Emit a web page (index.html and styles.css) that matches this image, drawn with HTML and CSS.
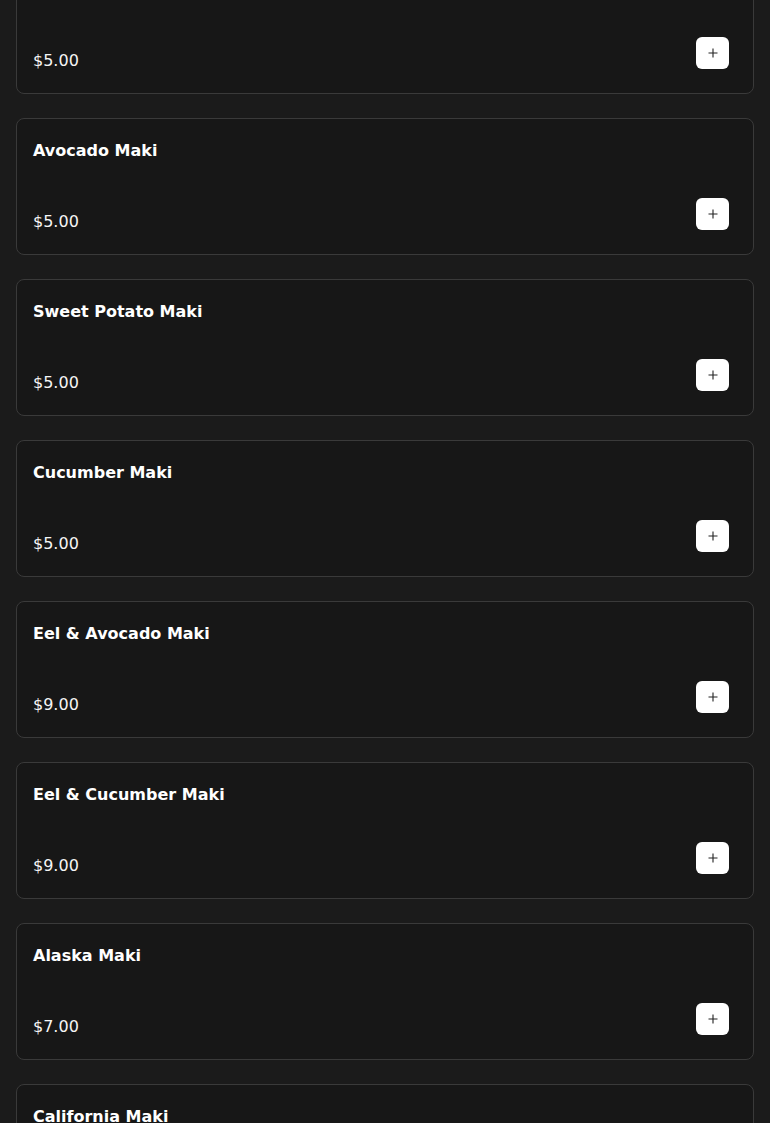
FILE: index.html
```html
<!DOCTYPE html>
<html lang="en">
<head>
    <meta charset="UTF-8">
    <meta name="viewport" content="width=device-width, initial-scale=1.0">
    <title>Menu - Maki</title>
    <link rel="stylesheet" href="styles.css">
</head>
<body>
    <div class="menu">
        <div class="item">
            <h3>Salmon Maki</h3>
            <div class="item-footer">
                <span class="price">$5.00</span>
                <button class="add-btn" aria-label="Add">
                    <svg viewBox="0 0 12 12"><path d="M6 1.5v9M1.5 6h9"/></svg>
                </button>
            </div>
        </div>
        <div class="item">
            <h3>Avocado Maki</h3>
            <div class="item-footer">
                <span class="price">$5.00</span>
                <button class="add-btn" aria-label="Add">
                    <svg viewBox="0 0 12 12"><path d="M6 1.5v9M1.5 6h9"/></svg>
                </button>
            </div>
        </div>
        <div class="item">
            <h3>Sweet Potato Maki</h3>
            <div class="item-footer">
                <span class="price">$5.00</span>
                <button class="add-btn" aria-label="Add">
                    <svg viewBox="0 0 12 12"><path d="M6 1.5v9M1.5 6h9"/></svg>
                </button>
            </div>
        </div>
        <div class="item">
            <h3>Cucumber Maki</h3>
            <div class="item-footer">
                <span class="price">$5.00</span>
                <button class="add-btn" aria-label="Add">
                    <svg viewBox="0 0 12 12"><path d="M6 1.5v9M1.5 6h9"/></svg>
                </button>
            </div>
        </div>
        <div class="item">
            <h3>Eel &amp; Avocado Maki</h3>
            <div class="item-footer">
                <span class="price">$9.00</span>
                <button class="add-btn" aria-label="Add">
                    <svg viewBox="0 0 12 12"><path d="M6 1.5v9M1.5 6h9"/></svg>
                </button>
            </div>
        </div>
        <div class="item">
            <h3>Eel &amp; Cucumber Maki</h3>
            <div class="item-footer">
                <span class="price">$9.00</span>
                <button class="add-btn" aria-label="Add">
                    <svg viewBox="0 0 12 12"><path d="M6 1.5v9M1.5 6h9"/></svg>
                </button>
            </div>
        </div>
        <div class="item">
            <h3>Alaska Maki</h3>
            <div class="item-footer">
                <span class="price">$7.00</span>
                <button class="add-btn" aria-label="Add">
                    <svg viewBox="0 0 12 12"><path d="M6 1.5v9M1.5 6h9"/></svg>
                </button>
            </div>
        </div>
        <div class="item">
            <h3>California Maki</h3>
            <div class="item-footer">
                <span class="price">$8.00</span>
                <button class="add-btn" aria-label="Add">
                    <svg viewBox="0 0 12 12"><path d="M6 1.5v9M1.5 6h9"/></svg>
                </button>
            </div>
        </div>
    </div>
</body>
</html>
```

FILE: styles.css
```css
body {
    font-family: "DejaVu Sans", "Noto Sans", sans-serif;
    background-color: #1b1b1b;
    color: #f2f2f2;
    margin: 0;
    padding: 0;
    overflow: hidden;
}
/* list is shown scrolled a bit, first card cut at the top */
.menu {
    display: flex;
    flex-direction: column;
    gap: 24px;
    padding: 0 16px;
    margin-top: -43px;
}
.item {
    display: flex;
    flex-direction: column;
    height: 137px;
    box-sizing: border-box;
    padding: 16px;
    background-color: #171717;
    border: 1px solid #3a3a3a;
    border-radius: 8px;
}
.item h3 {
    margin: 0;
    font-size: 16px;
    font-weight: bold;
    line-height: 32px;
    color: #ffffff;
}
.item-footer {
    margin-top: auto;
    display: flex;
    justify-content: space-between;
    align-items: flex-end;
}
.price {
    margin-bottom: 4px;
    font-size: 16px;
    line-height: 24px;
    color: #f5f5f5;
}
.add-btn {
    width: 33px;
    height: 32px;
    margin: 0 8px 8px 0;
    padding: 0;
    border: none;
    border-radius: 6px;
    background-color: #ffffff;
    display: flex;
    justify-content: center;
    align-items: center;
    cursor: pointer;
}
.add-btn svg {
    width: 12px;
    height: 12px;
    fill: none;
    stroke: #222222;
    stroke-width: 1.1;
}
```
